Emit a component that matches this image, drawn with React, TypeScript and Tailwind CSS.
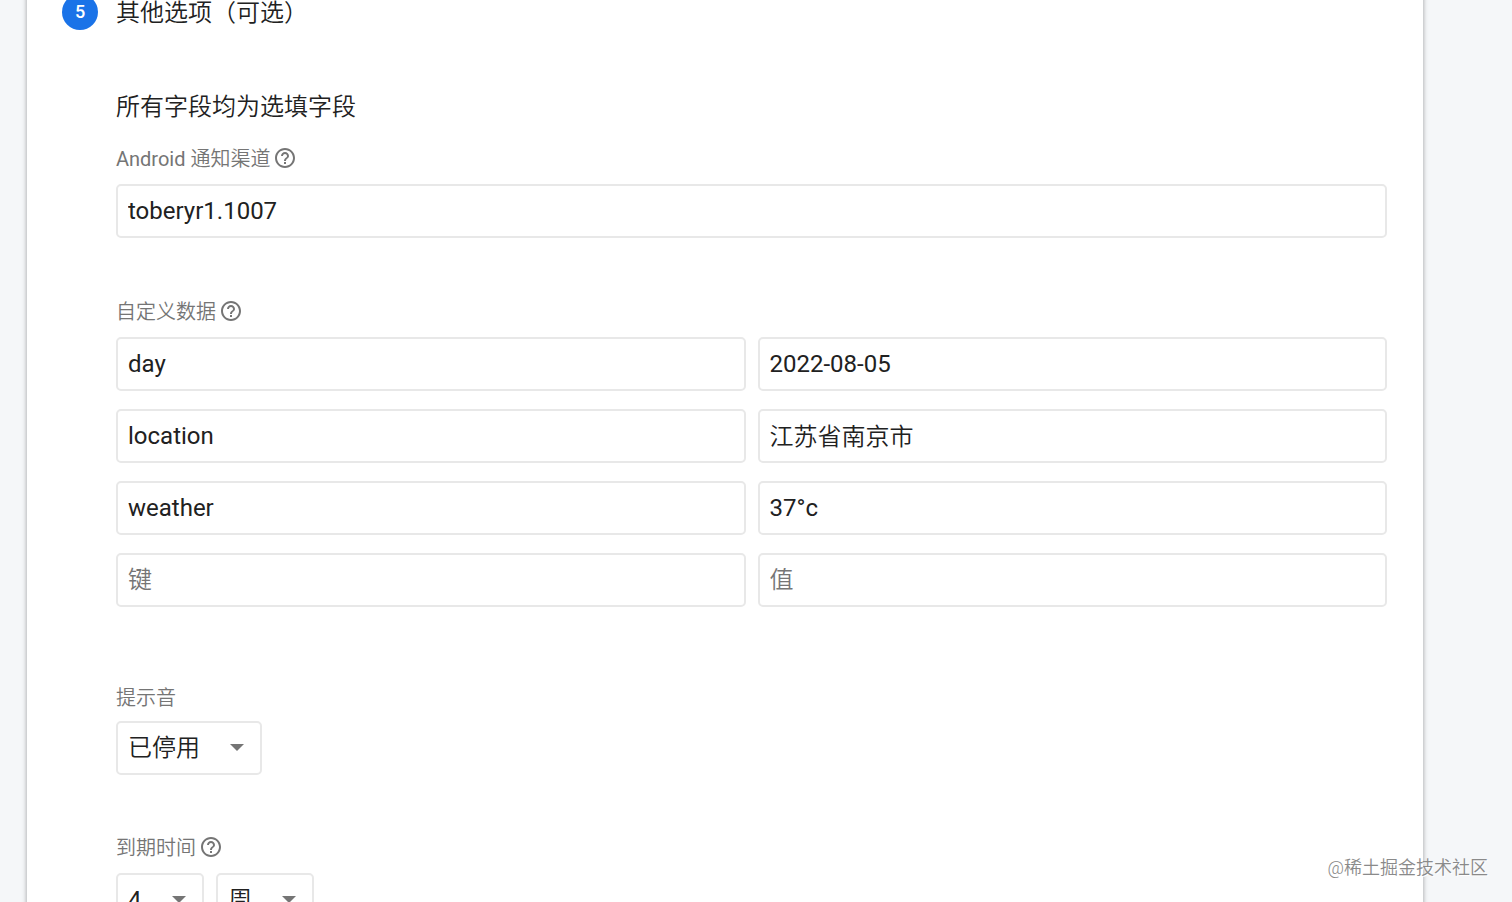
import { useState } from "react";
import type { ReactNode } from "react";
import { MdHelpOutline } from "react-icons/md";

const boxClass =
  "h-[54px] w-full min-w-0 rounded-[5px] border-2 border-[#e8e8e8] bg-white px-[10px] text-2xl text-[#212121] outline-none placeholder:font-[350] placeholder:text-[#757575] focus:border-[#1a73e8]";

const labelClass = "text-xl leading-[26px] font-[350] text-[#757575]";

const hasChinese = (text: string) => /[\u4e00-\u9fff]/.test(text);

function HelpButton({ about }: { about: string }) {
  return (
    <button type="button" aria-label={about} className="text-[#757575]">
      <MdHelpOutline className="size-6" />
    </button>
  );
}

function FieldLabel({
  htmlFor,
  help,
  children,
}: {
  htmlFor: string;
  help?: string;
  children: ReactNode;
}) {
  return (
    <div className="flex h-6 items-start gap-[3px]">
      <label htmlFor={htmlFor} className={labelClass}>
        {children}
      </label>
      {help && <HelpButton about={help} />}
    </div>
  );
}

function DataInput({
  id,
  name,
  value,
  onChange,
}: {
  id: string;
  name: string;
  value: string;
  onChange: (text: string) => void;
}) {
  return (
    <input
      id={id}
      aria-label={name}
      placeholder={name}
      className={`${boxClass} ${hasChinese(value) ? "pb-1 font-[350]" : "font-normal"}`}
      value={value}
      onChange={(e) => onChange(e.target.value)}
    />
  );
}

function Select({
  id,
  label,
  width,
  options,
}: {
  id: string;
  label?: string;
  width: string;
  options: string[];
}) {
  return (
    <div className={`relative ${width}`}>
      <select
        id={id}
        aria-label={label}
        className={`${boxClass} ${hasChinese(options[0]) ? "font-[350]" : "font-normal"} appearance-none`}
      >
        {options.map((option) => (
          <option key={option}>{option}</option>
        ))}
      </select>
      <svg
        viewBox="0 0 14 7"
        aria-hidden="true"
        className="pointer-events-none absolute top-[23px] right-[18px] h-[7px] w-[14px] fill-[#757575]"
      >
        <path d="M0 0h14L7 7z" />
      </svg>
    </div>
  );
}

function Group({ className, children }: { className: string; children: ReactNode }) {
  return <div className={`flex flex-col ${className}`}>{children}</div>;
}

const initialRows = [
  { key: "day", value: "2022-08-05" },
  { key: "location", value: "江苏省南京市" },
  { key: "weather", value: "37°c" },
  { key: "", value: "" },
];

export default function App() {
  const [rows, setRows] = useState(initialRows);

  const update = (index: number, field: "key" | "value", text: string) =>
    setRows(rows.map((row, i) => (i === index ? { ...row, [field]: text } : row)));

  return (
    <div className="relative h-screen overflow-hidden bg-[#f5f7f9] pr-[89px] pl-[27px] font-[Roboto,'Noto_Sans_CJK_SC',sans-serif] text-[#212121]">
      <main className="-mt-1.5 grid min-h-full grid-cols-[36px_minmax(0,1fr)] content-start gap-x-[18px] bg-white pr-9 pb-12 pl-[35px] shadow-[0_0_4px_1px_rgba(0,0,0,0.26)]">
        <span className="flex size-9 items-center justify-center rounded-full bg-[#1a73e8] text-lg font-medium text-white">
          5
        </span>
        <h2 className="text-2xl leading-[38px] font-[350]">其他选项（可选）</h2>

        <form className="col-start-2 mt-[57px] flex flex-col">
          <h3 className="text-2xl leading-9 font-[350]">所有字段均为选填字段</h3>

          <Group className="mt-[21px] gap-3.5">
            <FieldLabel htmlFor="channel" help="Android 通知渠道">
              <span className="font-normal">Android</span> 通知渠道
            </FieldLabel>
            <input id="channel" className={boxClass} defaultValue="toberyr1.1007" />
          </Group>

          <Group className="mt-[61px] gap-3.5">
            <FieldLabel htmlFor="key-0" help="自定义数据">
              自定义数据
            </FieldLabel>
            <div className="grid grid-cols-2 gap-x-3 gap-y-[18px]">
              {rows.map((row, i) => (
                <div key={i} className="contents">
                  <DataInput
                    id={`key-${i}`}
                    name="键"
                    value={row.key}
                    onChange={(text) => update(i, "key", text)}
                  />
                  <DataInput
                    id={`value-${i}`}
                    name="值"
                    value={row.value}
                    onChange={(text) => update(i, "value", text)}
                  />
                </div>
              ))}
            </div>
          </Group>

          <Group className="mt-[78px] gap-3">
            <FieldLabel htmlFor="sound">提示音</FieldLabel>
            <Select id="sound" width="w-[146px]" options={["已停用", "已启用"]} />
          </Group>

          <Group className="mt-[60px] gap-3.5">
            <FieldLabel htmlFor="expires" help="到期时间">
              到期时间
            </FieldLabel>
            <div className="flex gap-3">
              <Select id="expires" width="w-[88px]" options={["4", "3", "2", "1"]} />
              <Select id="unit" label="单位" width="w-[98px]" options={["周", "天"]} />
            </div>
          </Group>
        </form>
      </main>

      <p className="pointer-events-none absolute right-6 bottom-[22px] text-lg leading-6 font-[350] text-[#8a8a8a] [text-shadow:1px_1px_0_#fff]">
        @稀土掘金技术社区
      </p>
    </div>
  );
}
